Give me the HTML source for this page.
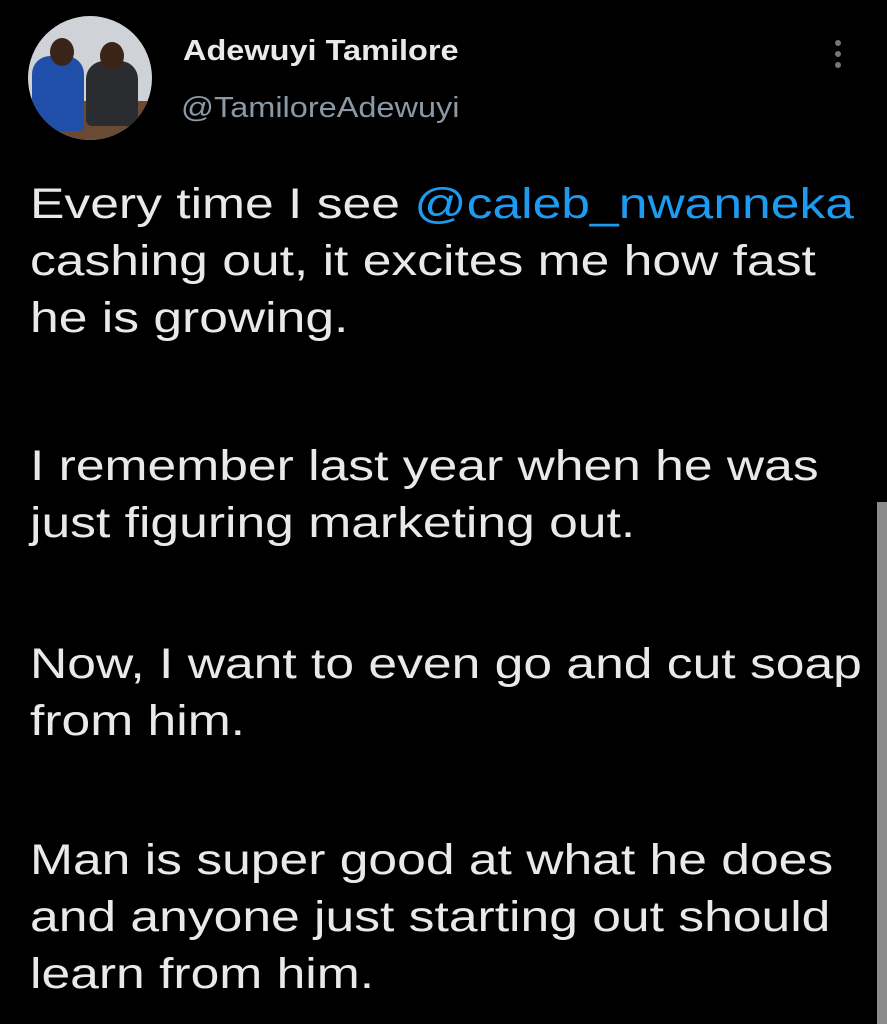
<!DOCTYPE html>
<html><head><meta charset="utf-8"><style>
html,body{margin:0;padding:0;background:#000;width:887px;height:1024px;overflow:hidden;font-family:"Liberation Sans",sans-serif}
.l{position:absolute;left:30px;color:#e7e9ea;font-size:43px;white-space:nowrap;line-height:1;transform:scaleX(1.2);transform-origin:0 0}
.m{color:#1d9bf0}
.h{position:absolute;left:183px;white-space:nowrap;transform:scaleX(1.12);transform-origin:0 0;font-size:29px}
</style></head><body>
<div style="position:absolute;left:28px;top:16px;width:124px;height:124px;border-radius:50%;overflow:hidden;background:#cfd3d8">
  <div style="position:absolute;left:0;top:85px;width:124px;height:40px;background:#6b4a35"></div>
  <div style="position:absolute;left:4px;top:40px;width:52px;height:75px;background:#1f4fa8;border-radius:18px 18px 6px 6px"></div>
  <div style="position:absolute;left:22px;top:22px;width:24px;height:28px;background:#3a2418;border-radius:50%"></div>
  <div style="position:absolute;left:58px;top:45px;width:52px;height:65px;background:#2a2c30;border-radius:18px 18px 6px 6px"></div>
  <div style="position:absolute;left:72px;top:26px;width:24px;height:28px;background:#3a2418;border-radius:50%"></div>
</div>
<div class="h" style="top:35px;color:#e7e9ea;font-weight:bold">Adewuyi Tamilore</div>
<div class="h" style="top:92px;color:#8b98a5;left:181px">@TamiloreAdewuyi</div>
<div style="position:absolute;left:835px;top:40px;width:6px;height:6px;border-radius:50%;background:#777"></div>
<div style="position:absolute;left:835px;top:51px;width:6px;height:6px;border-radius:50%;background:#777"></div>
<div style="position:absolute;left:835px;top:62px;width:6px;height:6px;border-radius:50%;background:#777"></div>
<div style="position:absolute;left:877px;top:502px;width:10px;height:522px;background:#8a8a8a"></div>
<div class="l" style="top:183px">Every time I see <span class="m">@caleb_nwanneka</span></div>
<div class="l" style="top:240px">cashing out, it excites me how fast</div>
<div class="l" style="top:297px">he is growing.</div>
<div class="l" style="top:445px">I remember last year when he was</div>
<div class="l" style="top:502px">just figuring marketing out.</div>
<div class="l" style="top:643px">Now, I want to even go and cut soap</div>
<div class="l" style="top:700px">from him.</div>
<div class="l" style="top:839px">Man is super good at what he does</div>
<div class="l" style="top:896px">and anyone just starting out should</div>
<div class="l" style="top:953px">learn from him.</div>
</body></html>
